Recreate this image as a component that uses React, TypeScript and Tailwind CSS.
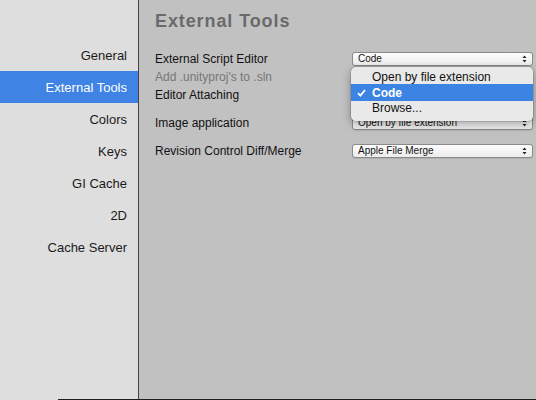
import React from "react";

const NAV = ["General", "External Tools", "Colors", "Keys", "GI Cache", "2D", "Cache Server"];

function Arrows() {
  return (
    <svg width="5" height="8" viewBox="0 0 5 8" className="shrink-0">
      <path d="M2.5 0.5 L4.5 3 L0.5 3 Z" fill="#222" />
      <path d="M2.5 7.5 L4.5 5 L0.5 5 Z" fill="#222" />
    </svg>
  );
}

function Popup({ value }: { value: string }) {
  return (
    <div className="flex h-[14px] w-[181px] items-center justify-between rounded-[3px] border border-[#8a8a8a] bg-gradient-to-b from-[#fdfdfd] to-[#ececec] pl-[5px] pr-[5px] text-[10px] leading-none text-[#111] shadow-[0_1px_0_rgba(0,0,0,0.08)]">
      <span>{value}</span>
      <Arrows />
    </div>
  );
}

function Row({ label, value, muted }: { label: string; value?: string; muted?: boolean }) {
  return (
    <div className="flex h-[18px] items-center">
      <div className={`w-[197px] ${muted ? "text-[#777]" : "text-[#111]"}`}>{label}</div>
      {value && <Popup value={value} />}
    </div>
  );
}

export default function App() {
  return (
    <div
      className="flex h-[400px] w-[536px] flex-col overflow-hidden text-[12px]"
      style={{ fontFamily: '"Liberation Sans", Arial, sans-serif' }}
    >
      <div className="flex min-h-0 flex-1">
        <div className="flex w-[138px] flex-col bg-[#dedede] pt-[39px]">
          {NAV.map((item) => (
            <div
              key={item}
              className={`flex h-[32px] items-center justify-end pr-[11px] pt-px text-[13px] ${
                item === "External Tools" ? "bg-[#3f83e4] text-white" : "text-[#1a1a1a]"
              }`}
            >
              {item}
            </div>
          ))}
        </div>
        <div className="w-px bg-[#454545]" />
        <div className="relative flex-1 bg-[#c1c1c1] pl-[16px] pt-[9px]">
          <div className="text-[18px] font-bold leading-[24px] tracking-[0.9px] text-[#6a6a6a]">
            External Tools
          </div>
          <div className="mt-[17px] flex flex-col">
            <Row label="External Script Editor" value="Code" />
            <Row label="Add .unityproj's to .sln" muted />
            <Row label="Editor Attaching" />
            <div className="h-[10px]" />
            <Row label="Image application" value="Open by file extension" />
            <div className="h-[10px]" />
            <Row label="Revision Control Diff/Merge" value="Apple File Merge" />
          </div>

          <div className="absolute left-[212px] top-[67px] w-[182px] rounded-[5px] bg-[#e9e9e9] pb-[6px] pt-[3px] text-[12px] text-[#111] shadow-[0_3px_8px_rgba(0,0,0,0.35)] ring-1 ring-black/10">
            <div className="flex h-[14px] items-center pl-[21px]">Open by file extension</div>
            <div className="flex h-[17px] items-center bg-[#3c84e4] text-white">
              <span className="flex w-[21px] justify-center">
                <svg width="9" height="8" viewBox="0 0 9 8">
                  <path d="M1 4.2 L3.4 6.6 L8 1" fill="none" stroke="#fff" strokeWidth="1.8" />
                </svg>
              </span>
              <span className="font-bold">Code</span>
            </div>
            <div className="flex h-[14px] items-center pl-[21px]">Browse...</div>
          </div>
        </div>
      </div>
      <div className="flex h-px">
        <div className="w-[58px] bg-[#dedede]" />
        <div className="flex-1 bg-[#1e1e1e]" />
      </div>
    </div>
  );
}
